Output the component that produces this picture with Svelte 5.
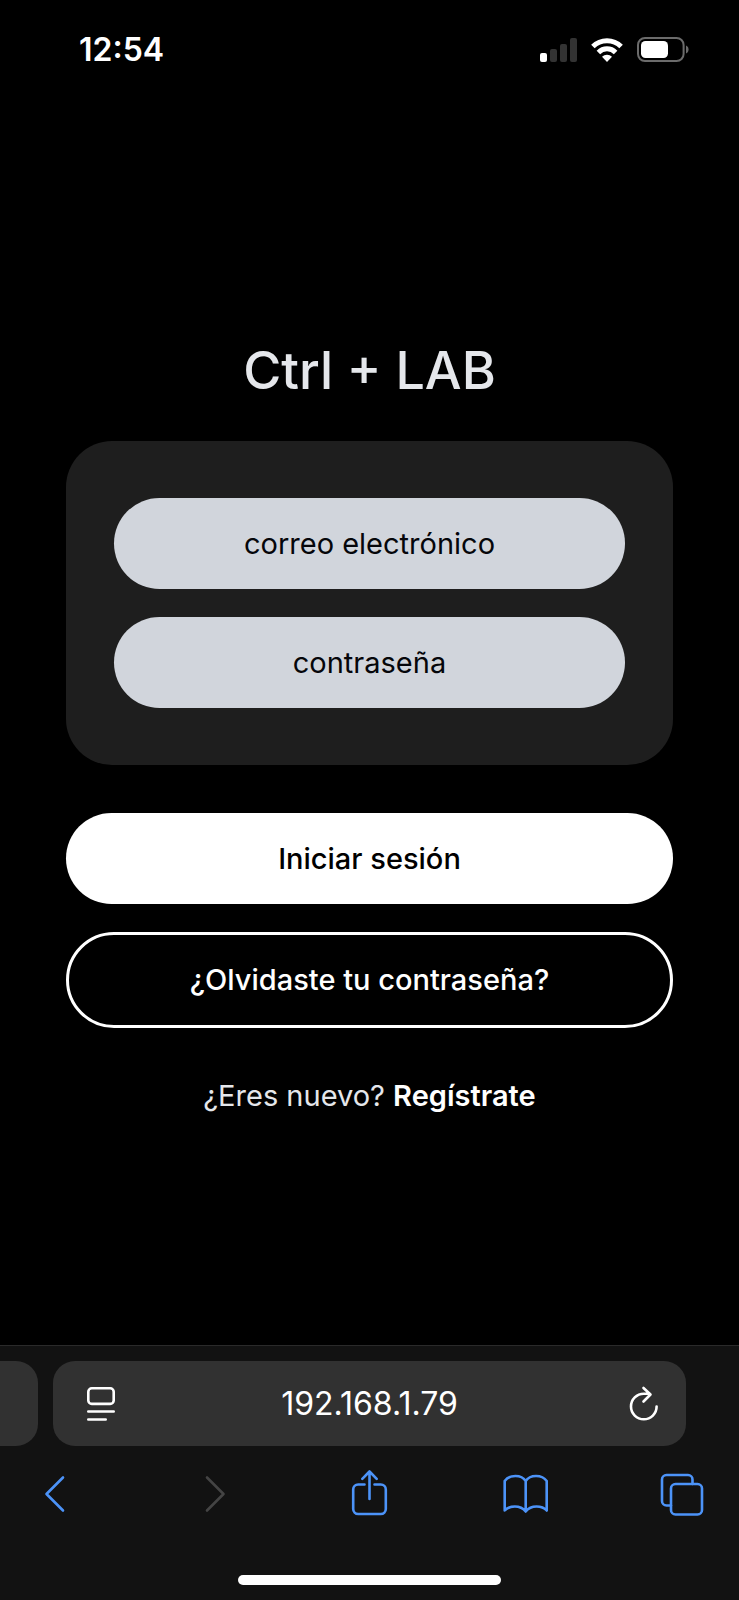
<script>
  let email = $state('');
  let password = $state('');
  let address = $state('192.168.1.79');

  const bars = [9, 13, 18, 24];
</script>

<div class="screen">
  <header class="status">
    <time class="clock">12:54</time>
    <div class="indicators">
      <div class="signal" role="img" aria-label="Signal">
        {#each bars as height, i}
          <span class="bar" class:on={i === 0} style="height: {height}px"></span>
        {/each}
      </div>
      <svg class="wifi" width="32" height="24" viewBox="0 0 32 24" aria-hidden="true">
        <g fill="none" stroke="#fff" stroke-width="5">
          <path d="M1.9 8.6a20 20 0 0 1 28.2 0" />
          <path d="M7.4 14.4a12.2 12.2 0 0 1 17.2 0" />
        </g>
        <path d="M16 24l-5-5.2a7.2 7.2 0 0 1 10 0z" fill="#fff" />
      </svg>
      <svg class="battery" width="52" height="25" viewBox="0 0 52 25" aria-hidden="true">
        <rect x="1" y="1" width="45.6" height="23" rx="7" fill="none" stroke="#6b6b6b" stroke-width="2" />
        <rect x="4" y="4" width="27" height="17" rx="4.5" fill="#fff" />
        <path d="M49 8.500c3.400 1.300 3.400 6.700 0 8z" fill="#6b6b6b" />
      </svg>
    </div>
  </header>

  <main>
    <h1>Ctrl + LAB</h1>
    <form onsubmit={(event) => event.preventDefault()}>
      <div class="card">
        <input class="pill" type="email" aria-label="correo electrónico" placeholder="correo electrónico" bind:value={email} />
        <input class="pill" type="password" aria-label="contraseña" placeholder="contraseña" bind:value={password} />
      </div>
      <div class="actions">
        <button class="primary" type="submit">Iniciar sesión</button>
        <button class="outline" type="button">¿Olvidaste tu contraseña?</button>
      </div>
    </form>
    <p class="signup">¿Eres nuevo? <a href="#registro">Regístrate</a></p>
  </main>

  <footer>
    <div class="tabs">
      <div class="previous"></div>
      <div class="address">
        <button type="button" aria-label="Page menu">
          <svg width="30" height="36" viewBox="0 0 30 36" fill="none" stroke="#fff" stroke-width="2.600" stroke-linecap="round">
            <rect x="2.300" y="2.300" width="25.400" height="15.600" rx="3.500" />
            <path d="M2.300 25.500h25.400M2.300 33.500h17.400" />
          </svg>
        </button>
        <input type="text" aria-label="Address" bind:value={address} />
        <button type="button" aria-label="Reload">
          <svg width="30" height="36" viewBox="0 0 30 36" fill="none" stroke="#fff" stroke-width="2.600" stroke-linecap="round" stroke-linejoin="round">
            <path d="M27.600 20.500a12.800 12.800 0 1 1-12.800-12.800h5.500M14.500 2l7 6.500-7 7" />
          </svg>
        </button>
      </div>
    </div>

    <nav>
      <button type="button" aria-label="Back">
        <svg width="48" height="48" viewBox="0 0 48 48"><path d="M32 7.500L15.500 24 32 40.500" /></svg>
      </button>
      <button type="button" aria-label="Forward" disabled>
        <svg width="48" height="48" viewBox="0 0 48 48"><path d="M19 7.500L35.500 24 19 40.500" /></svg>
      </button>
      <button type="button" aria-label="Share">
        <svg width="48" height="48" viewBox="0 0 48 48">
          <path d="M19.500 14.500h-6.300a5 5 0 0 0-5 5V39a5 5 0 0 0 5 5h22.600a5 5 0 0 0 5-5V19.500a5 5 0 0 0-5-5h-6.300M24.500 29V2M17.300 8.800l7.200-7.300 7.200 7.300" />
        </svg>
      </button>
      <button type="button" aria-label="Bookmarks">
        <svg width="48" height="48" viewBox="0 0 48 48">
          <path d="M24.700 11C20.500 4.300 8.500 4.300 3.700 11V40.500c4.500-5 15.500-6 21 1 5.500-7 16.500-6 21-1V11C41 4.300 29 4.300 24.700 11zV41" />
        </svg>
      </button>
      <button type="button" aria-label="Tabs">
        <svg width="48" height="48" viewBox="0 0 48 48">
          <rect x="13" y="14" width="31" height="30.500" rx="4.500" />
          <path d="M13 35.500H8.500a4.500 4.500 0 0 1-4.500-4.500V9.500A4.500 4.500 0 0 1 8.500 5H30a4.500 4.500 0 0 1 4.500 4.500V14" />
        </svg>
      </button>
    </nav>
    <div class="home"></div>
  </footer>
</div>

<style>
  :global(body) {
    margin: 0;
    background: #000;
  }

  .screen {
    display: flex;
    flex-direction: column;
    min-height: 100vh;
    background: #000;
    color: #fff;
    font-family: Inter, "Liberation Sans", sans-serif;
    font-size: 29px;
    line-height: 40px;
  }

  button,
  input {
    box-sizing: border-box;
    margin: 0;
    padding: 0;
    border: 0;
    font: inherit;
    color: inherit;
    background: none;
  }

  svg {
    display: block;
  }

  .status {
    display: flex;
    align-items: center;
    justify-content: space-between;
    height: 99px;
    padding: 0 50px 0 79px;
  }

  .clock {
    font-size: 32px;
    font-weight: 600;
  }

  .indicators {
    display: flex;
    align-items: center;
    gap: 14px;
  }

  .signal {
    display: flex;
    align-items: flex-end;
    gap: 3px;
  }

  .bar {
    width: 7px;
    border-radius: 2px;
    background: #333;
  }

  .bar.on {
    background: #fff;
  }

  main {
    flex: 1;
    padding: 240px 66px 0;
  }

  h1 {
    margin: 0 0 38px;
    font-size: 52px;
    font-weight: 500;
    line-height: 64px;
    text-align: center;
    color: #e5e7eb;
  }

  .card {
    display: flex;
    flex-direction: column;
    gap: 28px;
    padding: 57px 48px;
    border-radius: 46px;
    background: #1e1e1e;
  }

  .pill {
    width: 100%;
    height: 91px;
    padding: 0 40px;
    border-radius: 46px;
    background: #d1d5dc;
    color: #05060a;
    text-align: center;
  }

  .pill::placeholder {
    color: #05060a;
    opacity: 1;
  }

  .actions {
    display: flex;
    flex-direction: column;
    gap: 28px;
    margin-top: 48px;
  }

  .actions button {
    border-radius: 48px;
    font-weight: 500;
  }

  .primary {
    height: 91px;
    background: #fff;
    color: #000;
  }

  .outline {
    height: 96px;
    border: 3px solid #fff;
  }

  .signup {
    margin: 48px 0 0;
    text-align: center;
    color: #e5e7eb;
  }

  .signup a {
    color: #fff;
    font-weight: 600;
    text-decoration: none;
  }

  footer {
    border-top: 1px solid #2a2a2a;
    background: #121212;
  }

  .tabs {
    display: flex;
    gap: 15px;
    padding: 15px 53px 0 0;
  }

  .previous {
    width: 38px;
    border-radius: 0 22px 22px 0;
    background: #313131;
  }

  .address {
    display: flex;
    flex: 1;
    align-items: center;
    justify-content: space-between;
    height: 85px;
    padding: 0 27px 0 33px;
    border-radius: 22px;
    background: #313131;
  }

  .address input {
    flex: 1;
    min-width: 0;
    padding-right: 6px;
    font-size: 32px;
    text-align: center;
  }

  nav {
    display: flex;
    justify-content: space-between;
    padding: 24px 33px 0 31px;
  }

  nav svg {
    fill: none;
    stroke: #4c93f8;
    stroke-width: 2.6;
    stroke-linecap: round;
    stroke-linejoin: round;
  }

  nav button:disabled svg {
    stroke: #444;
  }

  .home {
    width: 263px;
    height: 10px;
    margin: 57px auto 15px;
    border-radius: 5px;
    background: #fff;
  }
</style>
